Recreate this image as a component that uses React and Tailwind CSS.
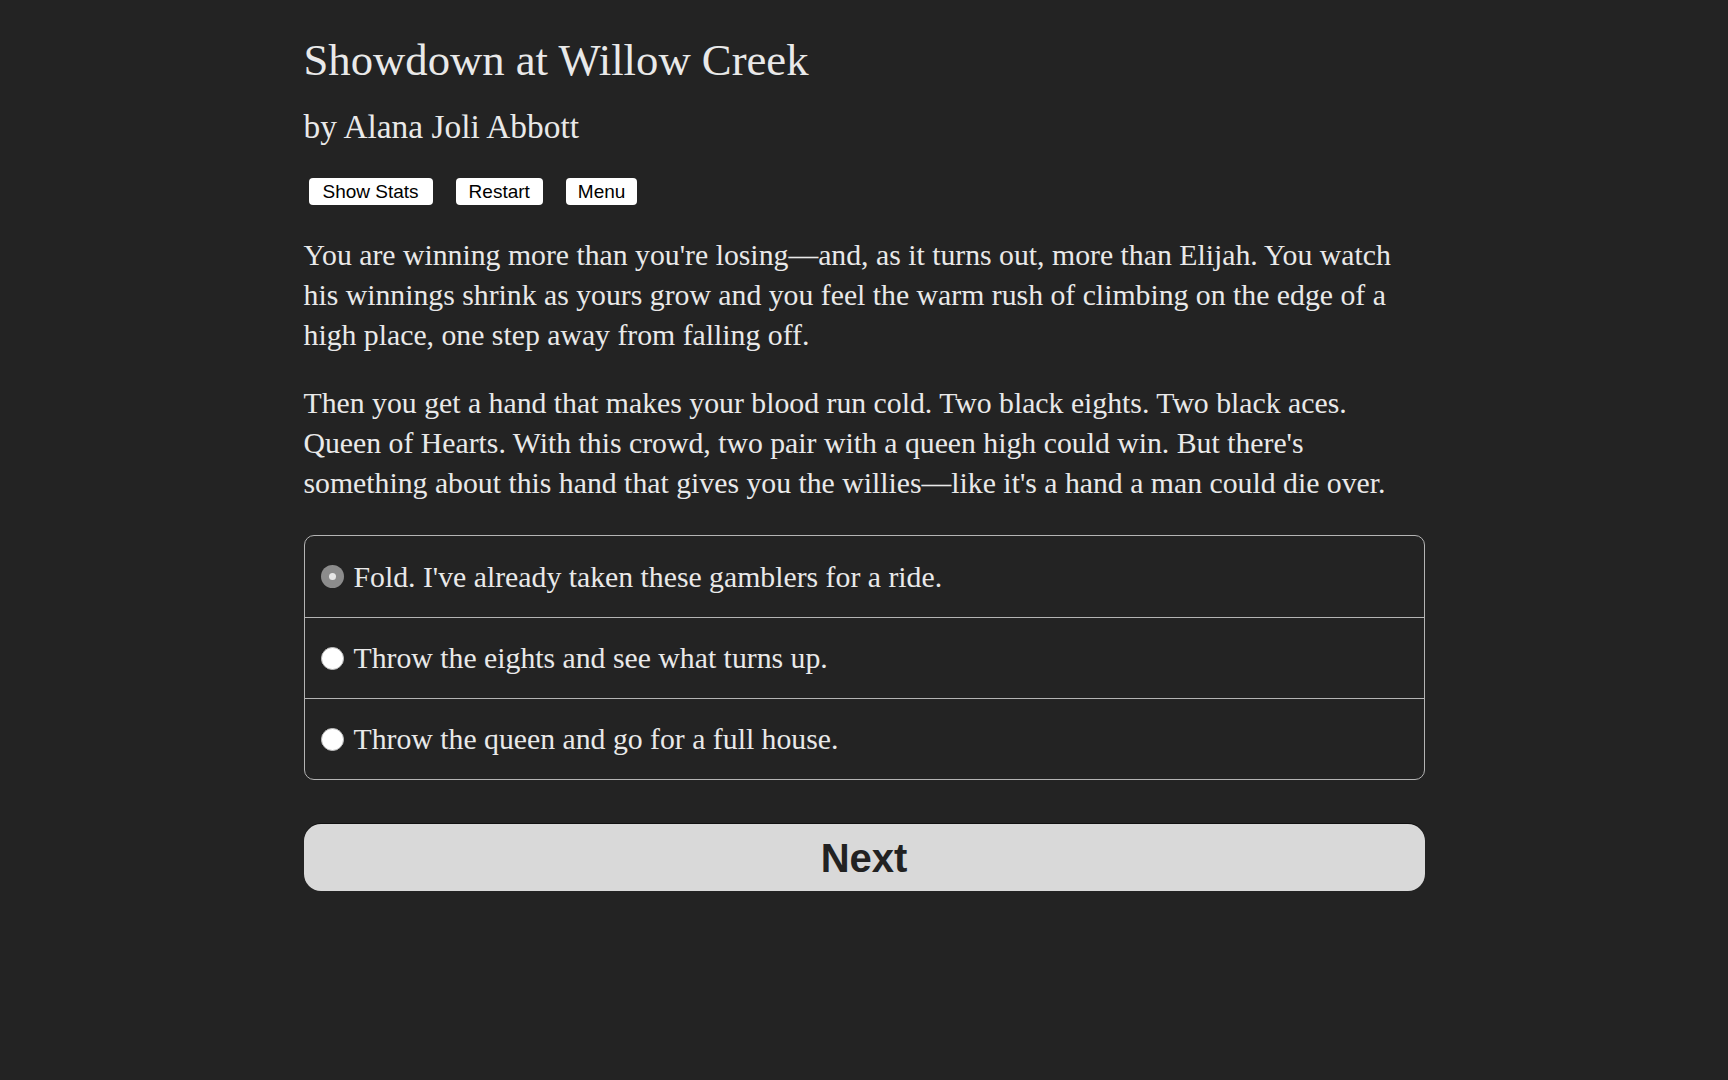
import { useState } from "react";

const choices = [
  "Fold. I've already taken these gamblers for a ride.",
  "Throw the eights and see what turns up.",
  "Throw the queen and go for a full house.",
];

function Radio({ checked }) {
  if (checked) {
    return (
      <span className="flex h-[23px] w-[23px] shrink-0 items-center justify-center rounded-full bg-[#8c8c8c]">
        <span className="h-[7px] w-[7px] rounded-full bg-[#e6e6e6]" />
      </span>
    );
  }
  return <span className="h-[23px] w-[23px] shrink-0 rounded-full border border-[#bdbdbd] bg-white" />;
}

export default function App() {
  const [picked, setPicked] = useState(0);

  const serif = { fontFamily: '"Liberation Serif", "Times New Roman", serif' };

  return (
    <div className="min-h-screen bg-[#232323] text-[#e9e9e9]" style={serif}>
      <div className="mx-auto w-[1121px] pt-[34px]">
        <h1 className="text-[44.7px] leading-[52px]">Showdown at Willow Creek</h1>
        <h2 className="mt-[21px] text-[33.4px] leading-[40px]">by Alana Joli Abbott</h2>

        <div className="ml-[5px] mt-[31px] flex gap-[23px] font-['Liberation_Sans',Arial,sans-serif] text-[19px] leading-[27px] text-black">
          <button className="h-[27px] rounded-[4px] bg-white px-[14px]">Show Stats</button>
          <button className="h-[27px] rounded-[4px] bg-white px-[13px]">Restart</button>
          <button className="h-[27px] rounded-[4px] bg-white px-[12px]">Menu</button>
        </div>

        <div className="mt-[30px] text-[29.75px] leading-[40px]">
          <p>
            You are winning more than you're losing—and, as it turns out, more than Elijah. You watch
            <br />
            his winnings shrink as yours grow and you feel the warm rush of climbing on the edge of a
            <br />
            high place, one step away from falling off.
          </p>
          <p className="mt-[28px]">
            Then you get a hand that makes your blood run cold. Two black eights. Two black aces.
            <br />
            Queen of Hearts. With this crowd, two pair with a queen high could win. But there's
            <br />
            something about this hand that gives you the willies—like it's a hand a man could die over.
          </p>
        </div>

        <div className="mt-[32px] overflow-hidden rounded-[10px] border border-[#b4b4b4]">
          {choices.map((c, i) => (
            <label
              key={c}
              onClick={() => setPicked(i)}
              className={`flex h-[81px] cursor-pointer items-center gap-[10px] pl-[16px] text-[29.75px] leading-[40px] ${i > 0 ? "border-t border-[#b4b4b4]" : ""}`}
            >
              <Radio checked={picked === i} />
              <span>{c}</span>
            </label>
          ))}
        </div>

        <button className="mt-[44px] flex h-[67px] w-full items-center justify-center rounded-[17px] bg-[#d9d9d9] font-['Liberation_Sans',Arial,sans-serif] text-[40px] font-bold text-[#222] shadow-[0_-1px_0_#111]">
          Next
        </button>
      </div>
    </div>
  );
}
